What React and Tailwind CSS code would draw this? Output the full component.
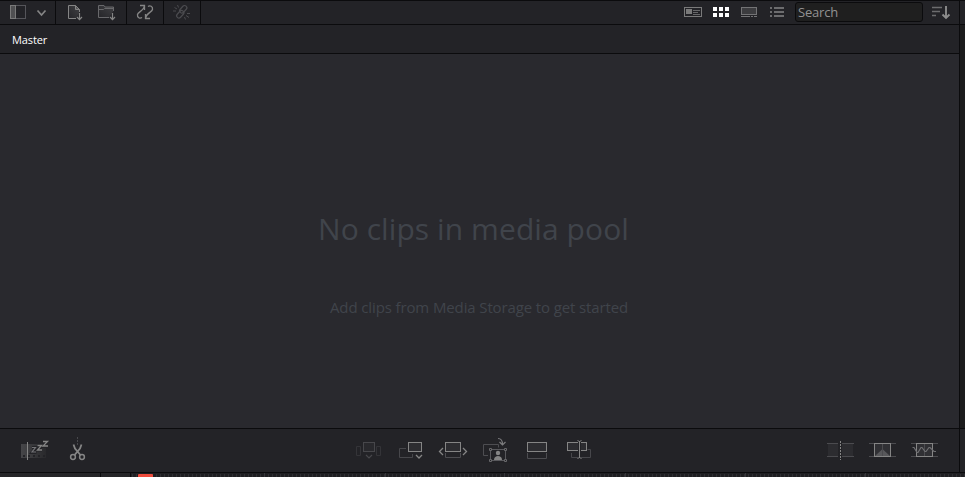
import React from "react";

// Every glyph is drawn on the pixel grid of the window, so `box` is its viewBox.
function Icon({ box, label, className = "", children }) {
  const [, , w, h] = box.split(" ");
  return (
    <svg
      viewBox={box}
      width={w}
      height={h}
      role="img"
      aria-label={label}
      fill="none"
      stroke="currentColor"
      strokeWidth="1"
      className={`block shrink-0 ${className}`}
    >
      {children}
    </svg>
  );
}

function Separator() {
  return <div className="h-full w-px shrink-0 bg-[#0b0b0d]" />;
}

function TopToolbar() {
  return (
    <div className="flex h-[25px] border-y border-[#0b0b0d] bg-[#232327] text-[#858585]">
      <div className="flex w-[55px] shrink-0 pl-2">
        <Icon box="8 1 20 23" label="Bin list">
          <rect x="10.5" y="5.5" width="15" height="13" stroke="#55555a" />
          <rect x="10.5" y="5.5" width="5" height="13" fill="#505052" stroke="#7a7a7a" />
        </Icon>
        <Icon box="34 1 15 23" label="Bin list options" className="ml-1.5">
          <path d="M37.5 10.5l4 4.500 4-4.500" strokeWidth="1.700" />
        </Icon>
      </div>
      <Separator />
      <div className="flex w-[70px] shrink-0 pl-2">
        <Icon box="64 1 22 23" label="Import media">
          <defs>
            <linearGradient id="page" x1="0" y1="1" x2="1" y2="0">
              <stop offset="0" stopColor="#252529" />
              <stop offset="1" stopColor="#414144" />
            </linearGradient>
          </defs>
          <path d="M76 18.500h-7.500v-13h7l4 4v2.500" fill="url(#page)" />
          <path d="M75.500 5.500v4h4" fill="#858585" fillOpacity="0.4" />
          <path d="M79.500 13v6.500M77 17l2.500 2.700 2.500-2.700" strokeWidth="1.200" />
        </Icon>
        <Icon box="94 1 24 23" label="Import folder" className="ml-2">
          <path d="M109 17.500h-10.500v-12h5.500l1 1.500h8.500v4" fill="url(#page)" stroke="#68686b" />
          <path d="M98.500 9.500h5l1-1h9" stroke="#68686b" />
          <path d="M112.500 13v6.500M110 17l2.500 2.700 2.500-2.700" strokeWidth="1.200" />
        </Icon>
      </div>
      <Separator />
      <div className="flex w-9 shrink-0 justify-center">
        <Icon box="135 1 20 23" label="Sync bin">
          <path
            d="M142 17.500C140 19 137 17.500 137.500 14.500C138 12 144 10.500 144.300 6M140 5.500h4.500V10M148 6.500C150 5 153 6.500 152.500 9.500C152 12 146 13.500 145.700 18M150 18.500h-4.500V14"
            strokeWidth="1.300"
          />
        </Icon>
      </div>
      <Separator />
      <div className="flex w-9 shrink-0 justify-center text-[#4b4b4f]">
        <Icon box="172 1 20 23" label="Unlink">
          <rect x="181" y="5" width="4.500" height="8.500" rx="2.250" transform="rotate(42 183.250 9.250)" strokeWidth="1.200" />
          <rect x="178" y="10" width="4.500" height="8.500" rx="2.250" transform="rotate(42 180.250 14.250)" strokeWidth="1.200" />
          <path d="M177.500 5l1 2.500M174.500 7.500l2.500 1.500M173 11h3M187 13.500h3M186 15.500l3 2M184.500 17l1 2.500" />
        </Icon>
      </div>
      <Separator />

      <div className="ml-auto flex">
        <Icon box="682 1 22 23" label="Metadata view">
          <rect x="684.5" y="7.5" width="17" height="9" stroke="#7a7a7a" />
          <path d="M686 9h6v5h-6z" fill="#7a7a7a" stroke="none" />
          <path d="M693 10.500h7M693 12.500h5M693 14.500h7" stroke="#68686a" />
        </Icon>
        <Icon box="710 1 22 23" label="Thumbnail view" className="ml-1.5 text-white">
          <path
            d="M713 7h4v4h-4zM719 7h4v4h-4zM725 7h4v4h-4zM713 13h4v4h-4zM719 13h4v4h-4zM725 13h4v4h-4z"
            fill="currentColor"
            stroke="none"
          />
        </Icon>
        <Icon box="738 1 22 23" label="Strip view" className="ml-1.5">
          <rect x="741.5" y="7.500" width="15" height="7" fill="#3c3c3f" stroke="#737375" />
          <path d="M741 16.500h9M751 16.500h2M754 16.500h3" stroke="#737375" />
        </Icon>
        <Icon box="767 1 20 23" label="List view" className="ml-[7px]">
          <path d="M770 8h2M774 8h10M770 12h2M774 12h10M770 16h2M774 16h10" strokeWidth="1.800" stroke="#6c6c6e" />
        </Icon>
        <input
          type="text"
          placeholder="Search"
          aria-label="Search"
          className="ml-2 mt-px h-5 w-32 rounded-[3px] border border-[#0b0b0d] bg-[#1f1f1f] px-[2px] text-[13px] leading-[18px] tracking-[-0.2px] text-[#929292] outline-none placeholder:text-[#929292] placeholder:opacity-100"
        />
        <Icon box="930 1 22 23" label="Sort" className="ml-[7px] mr-[7px] text-[#8c8c8c]">
          <path d="M932 7.500h10M932 11.500h8M932 15.500h4" strokeWidth="1.500" stroke="#6c6c6e" />
          <path d="M946 6v12M942.500 14.500l3.500 3.500 3.500-3.500" strokeWidth="1.900" />
        </Icon>
      </div>
    </div>
  );
}

function EmptyPool() {
  return (
    <main className="flex h-[374px] flex-col bg-[#29292e] pt-[155px] text-[#40444b]">
      <h1 className="ml-[318px] whitespace-nowrap text-[30px] leading-10 tracking-[0.08px]">
        No clips in media pool
      </h1>
      <p className="ml-[330px] mt-12 whitespace-nowrap text-[15px] leading-5 tracking-[-0.12px]">
        Add clips from Media Storage to get started
      </p>
    </main>
  );
}

function EditToolbar() {
  return (
    <div className="flex h-[45px] items-center border-y border-[#0b0b0d] bg-[#232327] text-[#858585]">
      <Icon box="20 429 30 43" label="Boring detector" className="ml-5">
        <defs>
          <linearGradient id="film" x1="0" x2="1">
            <stop offset="0" stopColor="#464649" />
            <stop offset="1" stopColor="#29292c" />
          </linearGradient>
        </defs>
        <rect x="21" y="444" width="25" height="14" fill="url(#film)" stroke="none" />
        <path d="M23 456h22" stroke="#232327" strokeWidth="2" strokeDasharray="2 3" />
        <path d="M27.500 442v18" />
        <path d="M32 447.500h4l-4 5h4.500M37.500 445.500h4l-4 4.500h4.500M43 441.500h4.500l-4.500 5h5" stroke="#232327" strokeWidth="3" />
        <path d="M32 447.500h3.500l-3.500 4.500h4" stroke="#737376" strokeWidth="1.200" />
        <path d="M37.500 445.500h4l-4 4.500h4.500M43 441.500h4.500l-4.500 4.500h5" strokeWidth="1.300" />
      </Icon>
      <Icon box="68 429 20 43" label="Split clips" className="ml-[18px]">
        <path d="M77.500 437v8" stroke="#48484c" strokeDasharray="2 1" />
        <path d="M73.500 444.500l1.500 4 5.500 6.500M81.500 444.500l-1.500 4-5.500 6.500" strokeWidth="1.800" />
        <circle cx="73" cy="457" r="2.400" strokeWidth="1.500" />
        <circle cx="82" cy="457" r="2.400" strokeWidth="1.500" />
      </Icon>

      <Icon box="354 429 30 43" label="Smart insert" className="ml-[266px] text-[#47474b]">
        <rect x="363.500" y="442.500" width="11" height="9" fill="#29292d" />
        <path d="M356.500 446.500h4v9h-4zM376.500 446.500h4v9h-4z" stroke="#343438" />
        <path d="M366 455l3 3 3-3" strokeWidth="1.200" />
      </Icon>
      <Icon box="396 429 30 43" label="Append" className="ml-3">
        <path d="M406 448.500h-6.500v9h13V454" stroke="#47474b" />
        <rect x="408.500" y="442.500" width="13" height="9" fill="#2d2d31" />
        <path d="M416 455l3 3 3-3" strokeWidth="1.300" />
      </Icon>
      <Icon box="438 429 30 43" label="Ripple overwrite" className="ml-3">
        <rect x="445.500" y="442.500" width="15" height="9" fill="#2d2d31" />
        <path d="M445.500 453v4.500h15V453" stroke="#4d4d51" />
        <path d="M443 448l-3.500 3.500 3.500 3.500M463 448l3.500 3.500-3.500 3.500" strokeWidth="1.300" />
      </Icon>
      <Icon box="480 429 30 43" label="Close up" className="ml-3">
        <path d="M488 455.500h-4.500v-11h15v3" stroke="#4d4d51" />
        <path d="M498 438.500c3 0 4.500 1.500 4.500 6M499.500 442l3 3 3-3" stroke="#7c7c7e" strokeWidth="1.200" />
        <path d="M492 449.500h12M492 460.500h12M490.500 451v8M505.500 451v8" stroke="#59595d" />
        <path d="M489.500 448.500h2v2h-2zM504.500 448.500h2v2h-2zM489.500 459.500h2v2h-2zM504.500 459.500h2v2h-2z" stroke="#68686b" />
        <g fill="#858585" stroke="none">
          <circle cx="498" cy="453" r="2.200" />
          <path d="M494 460c0-3 2-4 4-4s4 1 4 4z" />
        </g>
      </Icon>
      <Icon box="522 429 30 43" label="Place on top" className="ml-3">
        <rect x="527.500" y="442.500" width="19" height="9" fill="#2d2d31" />
        <path d="M527.500 453v5.500h19v-5.500" stroke="#4d4d51" />
      </Icon>
      <Icon box="564 429 30 43" label="Source overwrite" className="ml-3">
        <path d="M571.500 453v4.500h19v-8h-3" stroke="#47474b" />
        <rect x="567.500" y="442.500" width="19" height="8" fill="#2d2d31" />
        <path d="M579.500 442v16" stroke="#232327" strokeWidth="3" />
        <path d="M579.500 441v17M577.500 440.500l2 1 2-1M577.500 458.500l2-1 2 1" />
      </Icon>

      <Icon box="825 429 32 43" label="Cut" className="ml-[231px]">
        <path d="M828 444h10v12h-10zM842 444h11v12h-11z" fill="#2c2c30" stroke="none" />
        <path d="M827 443.500h11M842 443.500h12M827 456.500h11M842 456.500h12" stroke="#4b4b4f" />
        <path d="M840.500 441v19" strokeDasharray="2 1" />
      </Icon>
      <Icon box="867 429 32 43" label="Dissolve" className="ml-2.5">
        <path d="M869 443.500h27M869 456.500h27" stroke="#4b4b4f" />
        <rect x="874.500" y="443.500" width="16" height="13" fill="#303034" />
        <path d="M875 456l7.500-7 7.500 7z" fill="#58585b" stroke="none" />
        <path d="M882.500 444v12" stroke="#4b4b4f" />
      </Icon>
      <Icon box="909 429 32 43" label="Smooth cut" className="ml-2.5">
        <path d="M911 443.500h27M911 456.500h27" stroke="#4b4b4f" />
        <rect x="916.500" y="443.500" width="16" height="13" fill="#303034" />
        <path d="M924.500 444v12" stroke="#4b4b4f" />
        <path d="M912.500 447.500h1.500l3 5h1l3-5h1l3 4h1l3-4h1l4 4h2" stroke="#707073" strokeWidth="1.200" />
      </Icon>
    </div>
  );
}

function Ruler() {
  return (
    <div className="flex h-1 overflow-hidden bg-[#1f1f22]">
      <div className="h-full w-[101px] shrink-0 border-r border-[#0b0b0d] bg-[#252528]" />
      <div className="h-full w-[30px] shrink-0 border-r border-[#0b0b0d] bg-[#252528]" />
      <Icon box="131 473 834 4" label="Timeline ruler">
        <path d="M132 475.500h833" stroke="#303034" strokeWidth="3" strokeDasharray="1 3" />
        <path d="M264.500 473v4M385.500 473v4M504.500 473v4M625.500 473v4M745.500 473v4M865.500 473v4" stroke="#36363a" />
        <path d="M138 477v-2q0-1 1-1h13q1 0 1 1v2z" fill="#ee4b3c" stroke="none" />
      </Icon>
    </div>
  );
}

export default function App() {
  return (
    <div className="h-[477px] w-[965px] overflow-hidden bg-[#232327] font-['Open_Sans','Noto_Sans',sans-serif]">
      <div className="flex h-[473px]">
        <section className="w-[959px] shrink-0">
          <TopToolbar />
          <div className="flex h-[29px] items-center border-b border-[#0b0b0d] bg-[#232327] pl-3 pt-px text-[11px] leading-4 tracking-[-0.1px] text-white">
            Master
          </div>
          <EmptyPool />
          <EditToolbar />
        </section>
        <aside className="flex w-1.5 shrink-0 flex-col border-l border-[#0b0b0d]">
          <div className="h-[25px] border-y border-[#0b0b0d] bg-[#232327]" />
          <div className="h-[404px] border-b border-[#0b0b0d] bg-[#1c1c1d]" />
          <div className="h-11 border-b border-[#0b0b0d] bg-[#232327]" />
        </aside>
      </div>
      <Ruler />
    </div>
  );
}
